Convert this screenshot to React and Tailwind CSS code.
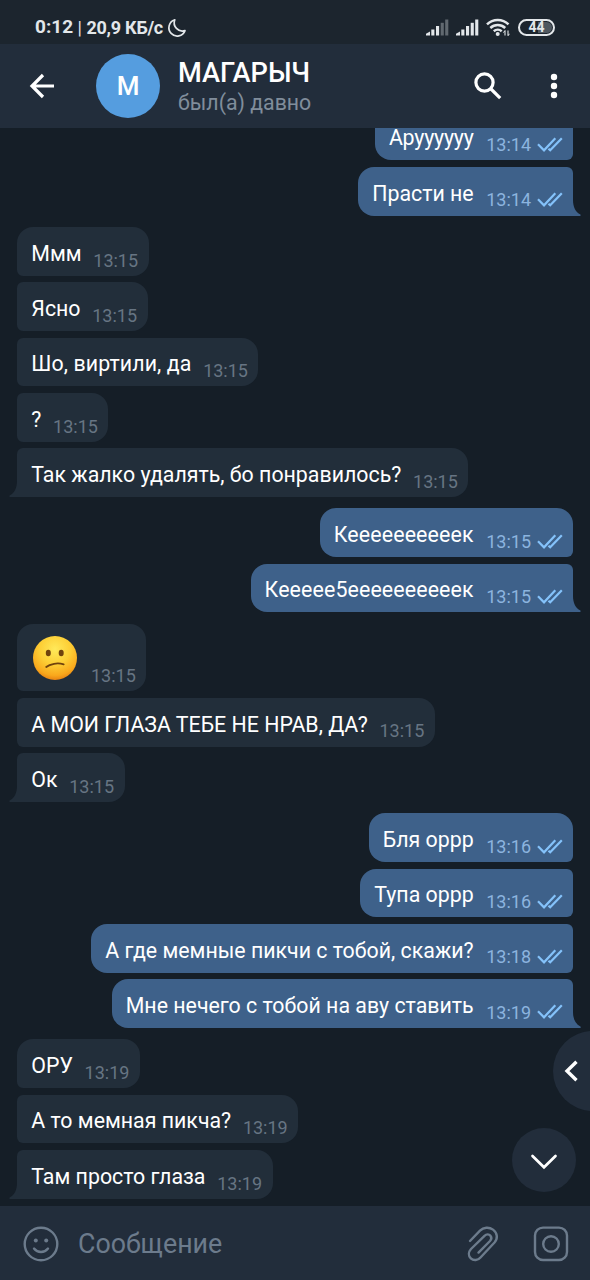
import React from 'react';
import clsx from 'clsx';

const GROUPS = [
  {
    out: true,
    messages: [
      { text: 'Аруууууу', time: '13:14', tracking: 'tracking-[-0.2px]' },
      { text: 'Прасти не', time: '13:14' },
    ],
  },
  {
    out: false,
    messages: [
      { text: 'Ммм', time: '13:15' },
      { text: 'Ясно', time: '13:15' },
      { text: 'Шо, виртили, да', time: '13:15', tracking: 'tracking-[0.1px]' },
      { text: '?', time: '13:15' },
      { text: 'Так жалко удалять, бо понравилось?', time: '13:15' },
    ],
  },
  {
    out: true,
    messages: [
      { text: `К${'е'.repeat(10)}к`, time: '13:15', tracking: 'tracking-[0.15px]' },
      { text: `К${'е'.repeat(5)}5${'е'.repeat(10)}к`, time: '13:15', tracking: 'tracking-[0.13px]' },
    ],
  },
  {
    out: false,
    messages: [
      { emoji: true, time: '13:15' },
      { text: 'А МОИ ГЛАЗА ТЕБЕ НЕ НРАВ, ДА?', time: '13:15' },
      { text: 'Ок', time: '13:15' },
    ],
  },
  {
    out: true,
    messages: [
      { text: 'Бля оррр', time: '13:16' },
      { text: 'Тупа оррр', time: '13:16' },
      { text: 'А где мемные пикчи с тобой, скажи?', time: '13:18' },
      { text: 'Мне нечего с тобой на аву ставить', time: '13:19' },
    ],
  },
  {
    out: false,
    messages: [
      { text: 'ОРУ', time: '13:19' },
      { text: 'А то мемная пикча?', time: '13:19' },
      { text: 'Там просто глаза', time: '13:19' },
    ],
  },
];

const Signal = ({ weak }) => (
  <svg width="23" height="17" viewBox="0 0 23 17" fill="#e3e7ea">
    <path d="M0 16.5V14.8l4-2.2v3.9z" />
    <rect x="5.3" y="10.5" width="3.1" height="6" />
    <rect x="10" y="7" width="3.1" height="9.5" />
    <rect x="14.7" y="3.8" width="3.1" height="12.7" opacity={weak ? 0.35 : 1} />
    <rect x="19.2" y="0.5" width="3.1" height="16" opacity={weak ? 0.35 : 1} />
  </svg>
);

const StatusBar = () => (
  <div className="h-[44px] shrink-0 bg-[#1c252e] flex items-center justify-between pl-[35px] pr-[35px] pt-[10px] text-[#e3e7ea]">
    <div className="flex items-center text-[18px] font-bold whitespace-pre pt-[1px]">
      <span className="text-[19px]">0:12</span>
      <span className="font-normal"> | </span>
      <span className="tracking-[-0.25px]">20,9 КБ/с</span>
      <svg className="ml-[4px]" width="20" height="20" viewBox="0 0 20 20" fill="none" stroke="#e3e7ea" strokeWidth="1.7" strokeLinejoin="round">
        <path d="M7.8 1.8A8.3 8.3 0 1 0 18 12.6A8.2 8.2 0 0 1 7.8 1.8z" />
      </svg>
    </div>
    <div className="flex items-center">
      <Signal weak />
      <div className="w-[7px]" />
      <Signal />
      <svg className="ml-[7px]" width="24" height="19" viewBox="0 0 24 19" fill="none" stroke="#e3e7ea" strokeWidth="2.5">
        <path d="M1 6.4A15.5 15.5 0 0 1 22.5 6.4" />
        <path d="M4.3 10A11 11 0 0 1 19.2 10" />
        <path d="M7.8 13.3A6 6 0 0 1 15.7 13.3" />
        <circle cx="11.7" cy="16" r="2" fill="#e3e7ea" stroke="none" />
        <path d="M19 12.6v5M22 12.6v5" strokeWidth="1.1" />
        <path d="M17.4 14.6l1.6-2M23.4 15.8l-1.4 2" strokeWidth="1" />
      </svg>
      <div className="ml-[8px] w-[37px] h-[17px] rounded-full border-2 border-[#e3e7ea] p-px">
        <div className="w-full h-full rounded-full flex items-center justify-center bg-linear-to-r from-[#1c252e] from-55% to-[#4f5860] to-55% text-[14px] leading-none font-bold">
          44
        </div>
      </div>
    </div>
  </div>
);

const Header = () => (
  <header className="h-[84px] shrink-0 bg-[#222d3b] flex items-center pl-[29px] pr-[32px]">
    <svg width="26" height="26" viewBox="0 0 26 26" fill="none" stroke="#fff" strokeWidth="3.2">
      <path d="M25 13H3M14 2L3 13l11 11" />
    </svg>
    <div className="ml-[41px] w-[64px] h-[64px] rounded-full bg-[#559ddf] flex items-center justify-center text-white text-[26px] font-medium">
      М
    </div>
    <div className="ml-[18px] flex-1 flex flex-col pt-[3px]">
      <div className="text-white text-[27.2px] leading-[31px] font-medium">МАГАРЫЧ</div>
      <div className="text-[#808d9b] text-[21.3px] leading-[28px]">был(а) давно</div>
    </div>
    <svg width="28" height="28" viewBox="0 0 28 28" fill="none" stroke="#fff" strokeWidth="3.2">
      <circle cx="10.5" cy="10.5" r="8.6" />
      <path d="M16.5 16.5l9.7 9.7" />
    </svg>
    <svg className="ml-[48px]" width="8" height="26" viewBox="0 0 8 26" fill="#fff">
      <circle cx="4" cy="4" r="3.2" />
      <circle cx="4" cy="13" r="3.2" />
      <circle cx="4" cy="22" r="3.2" />
    </svg>
  </header>
);

const Checks = () => (
  <svg className="ml-[6px] mb-[8.5px]" width="26" height="15" viewBox="0 0 26 15" fill="none" stroke="#84c2fa" strokeWidth="2.2">
    <path d="M1 7.3l6 6L18.3 1.2" />
    <path d="M11.5 11.8l1.7 1.5L24.8 1.2" />
  </svg>
);

const ConfusedFace = () => (
  <svg width="46" height="46" viewBox="0 0 46 46" fill="none">
    <defs>
      <radialGradient id="face" cx="0.5" cy="0.3" r="0.7">
        <stop offset="0" stopColor="#ffe95a" />
        <stop offset="0.5" stopColor="#fdce35" />
        <stop offset="0.85" stopColor="#f9a81c" />
        <stop offset="1" stopColor="#e88312" />
      </radialGradient>
    </defs>
    <circle cx="23" cy="23" r="22" fill="url(#face)" />
    <ellipse cx="16.3" cy="18" rx="2.5" ry="3.3" fill="#70420d" />
    <ellipse cx="29.2" cy="18" rx="2.5" ry="3.3" fill="#70420d" />
    <path d="M14.2 32C18 28.8 25.5 27.5 31.7 29.3" stroke="#70420d" strokeWidth="1.8" strokeLinecap="round" />
  </svg>
);

const Bubble = ({ message, out, first, last }) => (
  <div
    className={clsx(
      'relative flex items-end pl-[14px] whitespace-nowrap',
      message.emoji ? 'h-[67.4px]' : 'h-[48.8px]',
      out ? 'pr-[10px] self-end bg-[#3e618a] rounded-l-[16px]' : 'pr-[10.5px] self-start bg-[#222e3a] rounded-r-[16px]',
      out && (first ? 'rounded-tr-[16px]' : 'rounded-tr-[6px]'),
      out && (last ? 'rounded-br-none' : 'rounded-br-[6px]'),
      !out && (first ? 'rounded-tl-[16px]' : 'rounded-tl-[6px]'),
      !out && (last ? 'rounded-bl-none' : 'rounded-bl-[6px]')
    )}
  >
    {message.emoji ? (
      <div className="mb-[10px] ml-[1px] mr-[1px]"><ConfusedFace /></div>
    ) : (
      <span className={clsx('text-[21.35px] leading-[26px] mb-[9px] text-white', message.tracking)}>{message.text}</span>
    )}
    <span className={clsx('mb-[4.2px] text-[18px] leading-[22px]', out ? 'ml-[12.5px] text-[#8cb4df]' : 'ml-[11.7px] text-[#677583]')}>
      {message.time}
    </span>
    {out && <Checks />}
    {last && (
      <svg
        className={clsx('absolute bottom-0', out ? 'left-full -ml-px' : 'right-full -mr-px -scale-x-100')}
        width="10"
        height="16"
        viewBox="0 0 10 16"
        fill={out ? '#3e618a' : '#222e3a'}
      >
        <path d="M0 0h1C1 7 3.5 12 8.4 14.6Q9.5 15.6 8 16H0z" />
      </svg>
    )}
  </div>
);

const Composer = () => (
  <footer className="h-[74.5px] shrink-0 bg-[#222d3b] flex items-center pl-[23px] pr-[21px] pt-[3px]">
    <svg width="36" height="36" viewBox="0 0 36 36" fill="none" stroke="#6c7b8c" strokeWidth="2.4" strokeLinecap="round">
      <circle cx="18" cy="18" r="16.3" />
      <circle cx="12.8" cy="14.6" r="2" fill="#6c7b8c" stroke="none" />
      <circle cx="23.2" cy="14.6" r="2" fill="#6c7b8c" stroke="none" />
      <path d="M11 22.6c3.6 4.6 10.4 4.6 14 0" />
    </svg>
    <span className="ml-[19px] flex-1 text-[26.8px] text-[#6c7b8c]">Сообщение</span>
    {/* paperclip */}
    <svg width="32" height="36" viewBox="0 0 32 36" fill="none" stroke="#6c7b8c" strokeWidth="2.4" strokeLinecap="round" strokeLinejoin="round">
      <path d="M3 15L13 4.7C16.5 1.2 22 0.7 26 3.6C30.6 7 31 12.5 27.5 16.5L13.5 31.5C11 34.5 6.5 35 3.8 32.3C1.2 29.8 1.3 26 4 23L17.5 9.8C19.5 7.8 22 8 23.3 9.5C24.8 11.2 24.5 13.3 23 15L11.5 26.6" />
    </svg>
    <svg className="ml-[34px]" width="36" height="36" viewBox="0 0 36 36" fill="none" stroke="#6c7b8c" strokeWidth="2.4">
      <rect x="2" y="1.6" width="32" height="32.4" rx="8" />
      <circle cx="18" cy="18" r="7.8" />
    </svg>
  </footer>
);

const App = () => (
  <div className="relative w-[590px] h-[1280px] overflow-hidden flex flex-col bg-[#151e27] font-['Roboto',sans-serif]">
    <StatusBar />
    <Header />
    <main className="flex-1 min-h-0 overflow-hidden flex flex-col justify-end gap-[11.4px] pl-[17.3px] pr-[17px] pb-[6.8px]">
      {GROUPS.map((group, i) => (
        <div key={i} className="flex flex-col gap-[6.5px]">
          {group.messages.map((message, j) => (
            <Bubble
              key={j}
              message={message}
              out={group.out}
              first={j === 0 && i > 0}
              last={j === group.messages.length - 1}
            />
          ))}
        </div>
      ))}
    </main>
    <Composer />

    {/* Floating buttons over the chat */}
    <button className="absolute left-[553px] top-[1031px] w-[80px] h-[80px] rounded-full bg-[#222d3b] flex items-center pl-[11px]">
      <svg width="14" height="22" viewBox="0 0 14 22" fill="none" stroke="#fff" strokeWidth="3.4">
        <path d="M12.5 1.8L3 11l9.5 9.2" />
      </svg>
    </button>
    <button className="absolute left-[512px] top-[1128px] w-[64px] h-[64px] rounded-full bg-[#222d3b] flex items-center justify-center pt-[4px]">
      <svg width="28" height="16" viewBox="0 0 28 16" fill="none" stroke="#fff" strokeWidth="2.7" strokeLinecap="round">
        <path d="M2.5 2L14 13.3L25.5 2" />
      </svg>
    </button>
  </div>
);

export default App;
